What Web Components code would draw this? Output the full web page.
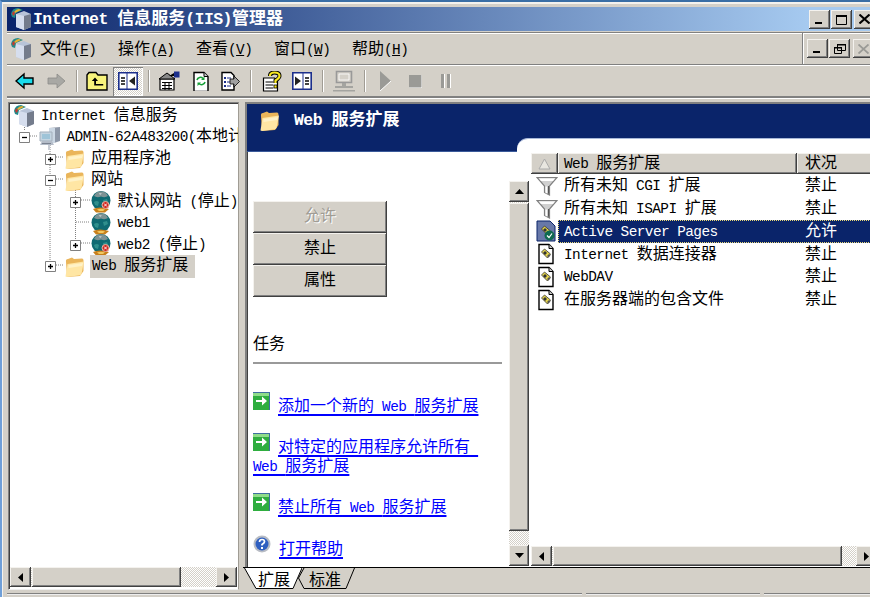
<!DOCTYPE html>
<html>
<head>
<meta charset="utf-8">
<title>Internet 信息服务(IIS)管理器</title>
<style>
  html, body { margin: 0; height: 100%; overflow: hidden; background: #d4d0c8; }
  body { font: 16px/20px "Liberation Mono", "Noto Sans CJK SC", monospace; color: #000; }
</style>
</head>
<body>
<mmc-window>
  <title-bar slot="title"><mix-text>Internet 信息服务(IIS)管理器</mix-text></title-bar>
  <menu-bar slot="menu">
    <menu-item label="文件" key="F"></menu-item>
    <menu-item label="操作" key="A"></menu-item>
    <menu-item label="查看" key="V"></menu-item>
    <menu-item label="窗口" key="W"></menu-item>
    <menu-item label="帮助" key="H"></menu-item>
  </menu-bar>
  <tool-bar slot="tools"></tool-bar>
  <tree-pane slot="tree">
    <tree-row level="0" icon="iis"><mix-text>Internet 信息服务</mix-text></tree-row>
    <tree-row level="1" icon="server" exp="-"><mix-text>ADMIN-62A483200(本地计算机)</mix-text></tree-row>
    <tree-row level="2" icon="folder" exp="+"><mix-text>应用程序池</mix-text></tree-row>
    <tree-row level="2" icon="folder" exp="-"><mix-text>网站</mix-text></tree-row>
    <tree-row level="3" icon="globestop" exp="+"><mix-text>默认网站 (停止)</mix-text></tree-row>
    <tree-row level="3" icon="globe"><mix-text>web1</mix-text></tree-row>
    <tree-row level="3" icon="globestop" exp="+"><mix-text>web2 (停止)</mix-text></tree-row>
    <tree-row level="2" icon="folder" exp="+" selected><mix-text>Web 服务扩展</mix-text></tree-row>
  </tree-pane>
  <ext-pane slot="ext">
    <task-button disabled>允许</task-button>
    <task-button>禁止</task-button>
    <task-button>属性</task-button>
    <task-heading>任务</task-heading>
    <task-link icon="go" gap="33.5"><mix-text>添加一个新的 Web 服务扩展</mix-text></task-link>
    <task-link icon="go" gap="22.5"><mix-text>对特定的应用程序允许所有&nbsp;</mix-text><br><mix-text>Web 服务扩展</mix-text></task-link>
    <task-link icon="go" gap="21.5"><mix-text>禁止所有 Web 服务扩展</mix-text></task-link>
    <task-link icon="help" gap="23"><mix-text>打开帮助</mix-text></task-link>
    <list-view slot="list">
      <list-row icon="filter" status="禁止">所有未知 CGI 扩展</list-row>
      <list-row icon="filter" status="禁止">所有未知 ISAPI 扩展</list-row>
      <list-row icon="docok" status="允许" selected>Active Server Pages</list-row>
      <list-row icon="doc" status="禁止">Internet 数据连接器</list-row>
      <list-row icon="doc" status="禁止">WebDAV</list-row>
      <list-row icon="doc" status="禁止">在服务器端的包含文件</list-row>
    </list-view>
  </ext-pane>
</mmc-window>

<script>
const FACE = '#d4d0c8'
const RAISED = `background:${FACE};box-shadow:inset -1px -1px #404040,inset 1px 1px #f4f2ee,inset -2px -2px #808080;`
const BASE = `.l{font-size:var(--lat,14.4px);letter-spacing:-.55px;white-space:pre;font-family:"Liberation Mono",monospace}`
const DITHER = `background:repeating-conic-gradient(#fff 0 25%,${FACE} 0 50%) 0 0/2px 2px;`

// ascii runs get a smaller size, same widths as the old bitmap font
const mix = s => s.replace(/[\x20-\x7e\u00a0]+/g, m => `<span class="l">${m}</span>`)

const doc = `<path d="M3 1.500h10l4 4v15H3z" fill="#fff" stroke="#000" stroke-width="1.400"/><path d="M13 1.500v4h4" fill="#ccc" stroke="#000"/>`
const gear = `<path d="M5.500 9l3-3 6 5-3 4z" fill="#e3d34a" stroke="#333" stroke-width=".8"/><path d="M7 10l2-2 2 2-2 2z" fill="#333"/><path d="M11 13l2-2 1.500 1.500-2 2z" fill="#555"/>`
const globe = `<ellipse cx="11" cy="10.500" rx="9.500" ry="9.500" fill="#0f6a72"/><path d="M4 6Q6 1.500 11 1.200 16 1.500 18 6 15 8 11 6.500 7 8 4 6z" fill="#7d9294"/><path d="M4 12q3-2 5 0l-1 4-3-1zM13 10l4-1 1 3-4 2z" fill="#2f8f8c"/><path d="M9 3l3 .5-2 1.500z" fill="#c8d4d4"/><path d="M3 19q6-3 16 0l-4 3.500H6z" fill="#c8801c"/><path d="M7 19.500q4-1.500 8 0l-2 1.500H9z" fill="#f2c860"/>`
const stop = `<circle cx="15.500" cy="15" r="3.500" fill="#d02820" stroke="#e8b0a0"/><path d="M14 13.500l3 3m0-3l-3 3" stroke="#fff" stroke-width=".9"/>`

const ICONS = {
  iis: [22, 24, `<path d="M6 7l8-3 7 3v13l-7 3-8-3z" fill="#b8c4d8"/><path d="M14 9l7-2v13l-7 3z" fill="#747c8c"/><path d="M6 7l8 2v14l-8-3z" fill="#d6deee"/><path d="M1 7Q2 1 8 1l5 2-7 3-1 5-3-1z" fill="#1f8a8c"/><path d="M4 5Q6 2 9 2l2 1-6 3z" fill="#e8b030"/><path d="M2 6l2-2 1 3-2 2z" fill="#c03a30"/>`],
  server: [22, 24, `<path d="M10 2l11-1v14l-6 2h-5z" fill="#8e98a8"/><path d="M10 2h6v15h-6z" fill="#ccd8e4"/><path d="M1 6h12v9H1z" fill="#c4d4e0" stroke="#a4b0bc"/><path d="M3 8h8v5H3z" fill="#9ec4d8"/><path d="M3 15h10l2 4H1z" fill="#b4bcc8"/><path d="M3 17h9v1H3z" fill="#7a8290"/><path d="M9 19h2v5H9z" fill="#c8ccd4"/>`],
  folder: [21, 22, `<path d="M2 6Q1.500 3 4 3l4-1.500L10 3l8-.5q1.500 0 1.500 2V15L16 20 3 21z" fill="#eab55a"/><path d="M1.500 20.500L3.500 8 20 5.500 17.500 18Q17 19 16 19.200L3 21z" fill="#ffe6a4"/><path d="M4.500 9L19 7l-1 3-13.500 2z" fill="#fff2c8"/>`],
  globe: [22, 24, globe],
  globestop: [22, 24, globe + stop],
  filter: [22, 22, `<path d="M1 2.500h20L13.500 11v9l-5-2.500V11z" fill="#d0d0d0" stroke="#808080" stroke-width="1.200"/><path d="M3 3.500h16L17 6H5z" fill="#fff"/><path d="M9.500 11.500h1.500v7l-1.500-.8z" fill="#fff"/><path d="M12 11h1v8l-1-.5z" fill="#555"/>`],
  doc: [20, 22, doc + gear],
  docok: [20, 22, `<path d="M1 1h13l5 5v15H1z" fill="#6878a8" stroke="#0a246a"/>` + gear + `<circle cx="13.500" cy="15.500" r="5" fill="#0e6a50"/><path d="M11 15.500l2 2 3-4" fill="none" stroke="#fff" stroke-width="1.200"/>`],
  go: [17, 18, `<path d="M0 0h17v18H0z" fill="#3f6f9f"/><path d="M0 1h16v17H0z" fill="#2fae3f"/><path d="M0 1h16v3H0z" fill="#8fdc88"/><path d="M3 8h6V4.500L14 9l-5 4.500V10H3z" fill="#fff"/>`],
  help: [18, 18, `<circle cx="9" cy="9" r="8.500" fill="#b8bcc4"/><circle cx="9" cy="9" r="6.500" fill="#2f5fc0"/><path d="M6.500 7Q6.500 4.500 9 4.500 11.500 4.500 11.500 6.800 11.500 8 9 9.500v1" fill="none" stroke="#fff" stroke-width="1.700"/><path d="M8 12h2v2H8z" fill="#fff"/>`],
  back: [20, 18, `<path d="M1 9l8-7v4h9v6H9v4z" fill="#19dcec" stroke="#000" stroke-width="1.400"/>`],
  forward: [20, 18, `<path d="M19 9l-8-7v4H2v6h9v4z" fill="#a8a8a4" stroke="#8c8c88" stroke-width=".8"/>`],
  up: [22, 20, `<path d="M1 4l2-2.500h7l2 2.500h9v15H1z" fill="#f8f47c" stroke="#000" stroke-width="1.400"/><path d="M6 5.500L2.800 9h2.400v4.500h9V12H7V9h2z" fill="#000" transform="translate(3 1)"/>`],
  toggleleft: [20, 18, `<path d="M.8.800h18.400v16.400H.8z" fill="#fff" stroke="#1c2f8c" stroke-width="1.600"/><path d="M9 1v16" stroke="#1c2f8c"/><path d="M3 5h4v2H3zM3 8h4v2H3zM3 11h4v2H3z" fill="#444"/><path d="M17 4.500v9L11 9z" fill="#222"/>`],
  toggleright: [20, 18, `<path d="M.8.800h18.400v16.400H.8z" fill="#fff" stroke="#1c2f8c" stroke-width="1.600"/><path d="M11 1v16" stroke="#1c2f8c"/><path d="M13 5h4v2h-4zM13 8h4v2h-4zM13 11h4v2h-4z" fill="#444"/><path d="M3 4.500v9L9 9z" fill="#222"/>`],
  props: [22, 20, `<path d="M2 8h14v11H2z" fill="#fff" stroke="#000" stroke-width="1.200"/><path d="M1 8l8-6 8 6z" fill="#888" stroke="#000"/><path d="M4 11h10v1H4zM4 14h10v1H4zM4 17h10v1H4z" fill="#000"/><path d="M7 12v7M11 12v7" stroke="#000"/><path d="M16 .5h5.500v6H16z" fill="#1c2f8c"/><path d="M11 5l5-3v3z" fill="#000"/>`],
  refresh: [18, 20, doc + `<path d="M6 9a3.500 3.500 0 0 1 6-1.500M14 11a3.500 3.500 0 0 1-6 1.500" fill="none" stroke="#18a038" stroke-width="1.600"/><path d="M13.500 5.500v3.500H10zM6.500 15v-3.500H10z" fill="#18a038"/>`],
  export: [20, 20, `<path d="M2 1.500h9l3 3V19H2z" fill="#fff" stroke="#000" stroke-width="1.400"/><path d="M4 6h2v2H4zM4 10h2v2H4zM4 14h2v2H4z" fill="#1c2f8c"/><path d="M7 7h4M7 11h4M7 15h4" stroke="#1c2f8c"/><path d="M10 8h4V5l5.500 5.500L14 16v-3h-4z" fill="#a0a0a0" stroke="#000" stroke-width=".8"/>`],
  helpdoc: [20, 21, `<path d="M1.500 7h11l3 3v10h-14z" fill="#fff" stroke="#000" stroke-width="1.200"/><path d="M3.500 11h8M3.500 14h8M3.500 17h8" stroke="#000"/><path d="M8 5Q8 1.500 12.500 1.500 17.500 1.500 17.500 5 17.500 7 13.500 9.500V12" fill="none" stroke="#000" stroke-width="4"/><path d="M8 5Q8 1.500 12.500 1.500 17.500 1.500 17.500 5 17.500 7 13.500 9.500V12" fill="none" stroke="#f8e820" stroke-width="2.200"/><path d="M12 14h3v3h-3z" fill="#f8e820" stroke="#000" stroke-width=".8"/>`],
  computer: [22, 22, `<path d="M3.500 1.500h15v11h-15z" fill="none" stroke="#999" stroke-width="1.600"/><path d="M2 16h18v2H2zM9 13h4v3H9zM0 20h22v1.500H0z" fill="#a4a4a0"/><path d="M6 4h10v6H6z" fill="${FACE}" stroke="#fff" stroke-width=".8"/>`],
  play: [11, 20, `<path d="M0 0l11 10L0 20z" fill="#9a9a96"/><path d="M0 20l11-10" stroke="#fff"/>`],
  stop: [13, 13, `<path d="M0 0h13v13H0z" fill="#9a9a96"/><path d="M13 0v13H0" fill="none" stroke="#fff"/>`],
  pause: [10, 14, `<path d="M0 0h3v14H0zM6 0h3v14H6z" fill="#9a9a96"/><path d="M3.500 0v14M9.500 0v14" stroke="#fff"/>`],
  min: [9, 9, `<path d="M0 7h7v2H0z" fill="#000"/>`],
  max: [11, 11, `<path d="M.5 1.500h10v9H.5z" fill="none" stroke="#000"/><path d="M0 1h11v2H0z" fill="#000"/>`],
  close: [11, 10, `<path d="M.5.500l10 9m0-9l-10 9" stroke="#000" stroke-width="2"/>`],
  closeoff: [11, 10, `<path d="M.5.500l10 9m0-9l-10 9" stroke="#9a9a96" stroke-width="1.800"/>`],
  restore: [12, 11, `<path d="M3.500 1.500h8v6h-8zM.5 4.500h7v6h-7z" fill="${FACE}" stroke="#000"/><path d="M3 1h9v1.500H3zM0 4h8v1.500H0z" fill="#000"/>`],
}

class MixText extends HTMLElement {
  connectedCallback() {
    if (this.shadowRoot) return
    const text = this.textContent
    this.textContent = ''
    this.attachShadow({ mode: 'open' }).innerHTML = `<style>:host{display:inline}${BASE}</style>${mix(text)}`
  }
}
customElements.define('mix-text', MixText)

class AppIcon extends HTMLElement {
  connectedCallback() {
    if (this.shadowRoot) return
    const [w, h, body] = ICONS[this.getAttribute('name')]
    this.attachShadow({ mode: 'open' }).innerHTML = `
      <style>:host{display:inline-flex;flex:none;line-height:0}</style>
      <svg width="${w}" height="${h}" viewBox="0 0 ${w} ${h}">${body}</svg>`
  }
}
customElements.define('app-icon', AppIcon)

class MmcWindow extends HTMLElement {
  connectedCallback() {
    this.attachShadow({ mode: 'open' }).innerHTML = `
      <style>
        :host {
          display: block; width: 880px; height: 597px; box-sizing: border-box; overflow: hidden;
          border-top: 2px solid #3a6ea5; border-left: 2px solid #6f9fd8;
        }
        .frame {
          height: 100%; box-sizing: border-box; border-top: 2px solid #f4f2ee; border-left: 1px solid #f4f2ee;
          padding: 3px 1px 0 4px; display: flex; flex-direction: column;
        }
        .panes { display: flex; gap: 6px; margin: 4px 0 0 1px; height: 488px; }
        .status { display: flex; gap: 4px; margin-top: 3px; flex: 1; }
        .status div { border-top: 1px solid #808080; box-shadow: inset 0 1px #eee; }
      </style>
      <div class="frame">
        <slot name="title"></slot>
        <slot name="menu"></slot>
        <slot name="tools"></slot>
        <div class="panes"><slot name="tree"></slot><slot name="ext"></slot></div>
        <div class="status">
          <div style="width:575px"></div><div style="width:174px"></div><div style="flex:1"></div>
        </div>
      </div>`
  }
}
customElements.define('mmc-window', MmcWindow)

class CapButton extends HTMLElement {
  connectedCallback() {
    this.attachShadow({ mode: 'open' }).innerHTML = `
      <style>
        :host { display:flex; flex:none; width:21px; height:19px; align-items:center; justify-content:center; ${RAISED} }
      </style>
      <app-icon name="${this.getAttribute('glyph')}"></app-icon>`
  }
}
customElements.define('cap-button', CapButton)

class TitleBar extends HTMLElement {
  connectedCallback() {
    this.attachShadow({ mode: 'open' }).innerHTML = `
      <style>
        :host {
          display: flex; align-items: center; height: 24px; margin-bottom: 1px; flex: none;
          background: linear-gradient(90deg, #0a246a, #a6caf0 92%);
          color: #fff; font-weight: bold; font-size: 17px; --lat: 16.500px; padding: 0 4px 0 3px;
        }
        .txt { margin-left: 1px; flex: 1; white-space: nowrap; padding-top: 2px; }
        cap-button + cap-button { margin-left: 1px; }
        .close { margin-left: 2px !important; }
      </style>
      <app-icon name="iis"></app-icon>
      <span class="txt"><slot></slot></span>
      <cap-button glyph="min"></cap-button><cap-button glyph="max"></cap-button><cap-button class="close" glyph="close"></cap-button>`
  }
}
customElements.define('title-bar', TitleBar)

class MenuBar extends HTMLElement {
  connectedCallback() {
    this.attachShadow({ mode: 'open' }).innerHTML = `
      <style>
        :host {
          display: flex; align-items: center; height: 30px; flex: none; padding-left: 3px;
          border-top: 1px solid #808080; box-shadow: inset 0 1px #fff; padding-top: 1px;
          border-bottom: 1px solid #808080;
        }
        .items { display: flex; gap: 21.700px; margin-left: 8px; flex: 1; padding-top: 1px; }
        .mdi { display: flex; align-items: center; align-self: stretch; padding: 0 5px 0 4px; border-left: 1px solid #808080; box-shadow: inset 1px 0 #fff; margin-top: -1px; }
        .mdi cap-button + cap-button { margin-left: 1px; }
        .mdi .x { margin-left: 3px; }
      </style>
      <app-icon name="iis"></app-icon>
      <div class="items"><slot></slot></div>
      <div class="mdi"><cap-button glyph="min"></cap-button><cap-button glyph="restore"></cap-button><cap-button class="x" glyph="closeoff"></cap-button></div>`
  }
}
customElements.define('menu-bar', MenuBar)

class MenuItem extends HTMLElement {
  connectedCallback() {
    const label = this.getAttribute('label'), key = this.getAttribute('key')
    this.attachShadow({ mode: 'open' }).innerHTML = `
      <style>:host{display:block;white-space:nowrap}${BASE}</style>
      ${label}<span class="l">(<u>${key}</u>)</span>`
  }
}
customElements.define('menu-item', MenuItem)

class ToolBar extends HTMLElement {
  connectedCallback() {
    const groups = [['back', 'forward'], ['up', 'toggleleft'], ['props', 'refresh', 'export'], ['helpdoc', 'toggleright'], ['computer'], ['play', 'stop', 'pause']]
    const btn = n => `<div class="b ${n == 'toggleleft' ? 'on' : ''}"><app-icon name="${n}"></app-icon></div>`
    this.attachShadow({ mode: 'open' }).innerHTML = `
      <style>
        :host {
          display: flex; align-items: center; height: 30px; flex: none; padding-left: 3px;
          border-top: 1px solid #fff; border-bottom: 2px solid #808080; box-shadow: 0 1px #fff;
        }
        .b { width: 30.500px; height: 29px; display: flex; align-items: center; justify-content: center; }
        .on { ${DITHER} box-shadow: inset 1px 1px #808080, inset -1px -1px #fff; }
        .s { width: 1px; height: 22px; background: #a09c94; border-right: 1px solid #fff; margin: 0 4.500px; }
      </style>
      ${groups.map(g => g.map(btn).join('')).join('<div class="s"></div>')}`
  }
}
customElements.define('tool-bar', ToolBar)

class ScrollBar extends HTMLElement {
  connectedCallback() {
    const v = this.getAttribute('orient') == 'v'
    const arrow = d => `<svg width="9" height="9" viewBox="0 0 9 9"><path d="${d}" fill="#000"/></svg>`
    const first = v ? arrow('M4.500 2L9 7H0z') : arrow('M2 4.500L7 0v9z')
    const last = v ? arrow('M4.500 7L9 2H0z') : arrow('M7 4.500L2 0v9z')
    this.attachShadow({ mode: 'open' }).innerHTML = `
      <style>
        :host { display: flex; flex: none; flex-direction: ${v ? 'column' : 'row'}; ${v ? 'width' : 'height'}: 20px; ${DITHER} }
        .b { flex: none; ${v ? 'height' : 'width'}: 21px; display: flex; align-items: center; justify-content: center; ${RAISED} }
        .t { flex: none; ${v ? 'height' : 'width'}: ${this.getAttribute('before') || 0}px; ${RAISED} margin-${v ? 'top' : 'left'}: 1px; }
        .g { flex: 1; }
      </style>
      <div class="b">${first}</div><div class="t"></div><div class="g"></div><div class="b">${last}</div>`
  }
}
customElements.define('scroll-bar', ScrollBar)

class TreePane extends HTMLElement {
  connectedCallback() {
    // page coords minus the pane's padding box (9,103)
    const lines = [
      'M15.500 22V28', 'M21 33H29',
      'M41 42V158', 'M47 54H54', 'M47 76H54', 'M47 162H54',
      'M66.500 85V136', 'M72 97H81', 'M67 119H81', 'M72 140H81',
    ]
    this.attachShadow({ mode: 'open' }).innerHTML = `
      <style>
        :host {
          display: flex; flex-direction: column; position: relative; flex: none; width: 231px; height: 488px; box-sizing: border-box;
          background: #fff; border: 1px solid #808080; border-color: #808080 #a09c94 #eee #808080;
          box-shadow: inset 1px 1px #404040;
        }
        svg { position: absolute; left: 0; top: 0; }
        .rows { flex: 1; padding: 2.500px 0 0 1px; overflow: hidden; position: relative; }
        scroll-bar { margin: 0 1px 2px 1px; }
      </style>
      <svg width="229" height="200"><path d="${lines.join('')}" fill="none" stroke="#808080" stroke-dasharray="1 1"/></svg>
      <div class="rows"><slot></slot></div>
      <scroll-bar before="149"></scroll-bar>`
  }
}
customElements.define('tree-pane', TreePane)

class TreeRow extends HTMLElement {
  connectedCallback() {
    const level = +this.getAttribute('level'), exp = this.getAttribute('exp')
    const indent = level ? 25.5 * (level - 1) + 9 : 3
    const sign = exp ? `<svg width="11" height="11" viewBox="0 0 11 11"><path d="M.5.500h10v10H.5z" fill="#fff" stroke="#808080"/><path d="M3 5.500h5${exp == '+' ? 'M5.500 3v5' : ''}" stroke="#000" stroke-width="1.300"/></svg>` : ''
    this.attachShadow({ mode: 'open' }).innerHTML = `
      <style>
        :host { display: flex; align-items: center; height: 21.500px; padding-left: ${indent}px; white-space: nowrap; }
        .e { width: 11px; height: 11px; flex: none; margin-right: 8.500px; line-height: 0; ${level ? '' : 'display:none'} }
        .t { margin-left: 4px; padding: 0 2px; line-height: 23px; ${this.hasAttribute('selected') ? `background:${FACE};margin-left:5px;padding-right:7px` : ''} }
      </style>
      <div class="e">${sign}</div>
      <app-icon name="${this.getAttribute('icon')}"></app-icon>
      <span class="t"><slot></slot></span>`
  }
}
customElements.define('tree-row', TreeRow)

class ExtPane extends HTMLElement {
  connectedCallback() {
    this.attachShadow({ mode: 'open' }).innerHTML = `
      <style>
        :host { display: flex; flex-direction: column; flex: 1; height: 488px; min-width: 0; }
        .sheet {
          height: 465px; flex: none; box-sizing: border-box; background: #fff; display: flex; flex-direction: column;
          border-top: 2px solid #808080; border-left: 2px solid #808080; box-shadow: inset 1px 0 #404040;
        }
        .band {
          height: 48px; flex: none; box-sizing: border-box; background: #0a246a; border-bottom: 1px solid #3a5a9a;
          display: flex; color: #fff; font-weight: bold; font-size: 17px; --lat: 16.500px;
        }
        .head { display: flex; gap: 14px; align-items: center; box-sizing: border-box; padding-left: 12px; height: 34px; width: 270px; white-space: nowrap; }
        .flap { flex: 1; height: 13px; align-self: flex-end; margin-bottom: -1px; background: #fff; border-top: 1px solid #a8b8d8; border-top-left-radius: 11px; }
        .body { flex: 1; display: flex; min-height: 0; }
        .tasks { width: 249px; padding: 49px 7px 0 6px; flex: none; }
        scroll-bar { margin: 29px 2px 1px 0; }
        .list { flex: 1; display: flex; flex-direction: column; min-width: 0; }
        .list scroll-bar { margin: 0 2px 1px 0; }
        .lv { flex: 1; }
        .tabs { flex: 1; display: flex; border-top: 1px solid #000; margin-left: -2px; padding-left: 1px; align-items: flex-start; }
      </style>
      <div class="sheet">
        <div class="band">
          <div class="head"><app-icon name="folder"></app-icon><mix-text>Web 服务扩展</mix-text></div>
          <div class="flap"></div>
        </div>
        <div class="body">
          <div class="tasks"><slot></slot></div>
          <scroll-bar orient="v" before="328"></scroll-bar>
          <div class="list"><div class="lv"><slot name="list"></slot></div><scroll-bar before="289"></scroll-bar></div>
        </div>
      </div>
      <div class="tabs"><tab-item active>扩展</tab-item><tab-item>标准</tab-item></div>`
  }
}
customElements.define('ext-pane', ExtPane)

class TaskButton extends HTMLElement {
  connectedCallback() {
    this.attachShadow({ mode: 'open' }).innerHTML = `
      <style>
        :host { display: flex; width: 134px; height: 32px; box-sizing: border-box; padding-bottom: 1px; align-items: center; justify-content: center; ${RAISED}
          ${this.hasAttribute('disabled') ? 'color:#a09c94;text-shadow:1px 1px #fff;' : ''} }
      </style><slot></slot>`
  }
}
customElements.define('task-button', TaskButton)

class TaskHeading extends HTMLElement {
  connectedCallback() {
    this.attachShadow({ mode: 'open' }).innerHTML = `
      <style>
        :host { display: block; margin-top: 37px; line-height: 22px; padding-bottom: 6px; border-bottom: 2px solid #999; }
      </style><slot></slot>`
  }
}
customElements.define('task-heading', TaskHeading)

class TaskLink extends HTMLElement {
  connectedCallback() {
    this.attachShadow({ mode: 'open' }).innerHTML = `
      <style>
        :host { display: block; margin-top: ${this.getAttribute('gap')}px; line-height: 19px; }
        app-icon { vertical-align: top; margin: -6px 8px 0 0; }
        a { color: #0000ff; text-decoration: underline; text-decoration-thickness: 1.500px; text-underline-offset: 3px; }
      </style>
      <app-icon name="${this.getAttribute('icon')}"></app-icon><a href="#"><slot></slot></a>`
  }
}
customElements.define('task-link', TaskLink)

class ListView extends HTMLElement {
  connectedCallback() {
    this.attachShadow({ mode: 'open' }).innerHTML = `
      <style>
        :host { display: block; }
        .h { display: flex; height: 21px; margin: 1px 0 .5px; }
        .h div { ${RAISED} line-height: 23px; white-space: nowrap; overflow: hidden; box-sizing: border-box; }
        .c0 { width: 27px; display: flex; align-items: center; justify-content: center; }
        .c1 { width: 239px; padding-left: 6px; }
        .c2 { flex: 1; padding-left: 8px; }
        ${BASE}
      </style>
      <div class="h">
        <div class="c0"><svg width="13" height="12"><path d="M6.500 1L12 11H1z" fill="#e8e6e0" stroke="#aaa"/></svg></div>
        <div class="c1">${mix('Web 服务扩展')}</div>
        <div class="c2">状况</div>
      </div>
      <slot></slot>`
  }
}
customElements.define('list-view', ListView)

class ListRow extends HTMLElement {
  connectedCallback() {
    const sel = this.hasAttribute('selected')
    const text = this.textContent
    this.textContent = ''
    this.attachShadow({ mode: 'open' }).innerHTML = `
      <style>
        :host { display: flex; align-items: center; height: 22.750px; white-space: nowrap; }
        .i { width: 27px; padding-left: 5px; box-sizing: border-box; flex: none; display: flex; }
        .m { flex: 1; align-self: stretch; display: flex; align-items: center; box-sizing: border-box; padding: 1px 0 0 6px;
          ${sel ? 'background:#0a246a;color:#fff;outline:1px dotted #e8d878;outline-offset:-1px;' : ''} }
        .n { width: 241px; flex: none; }
        ${BASE}
      </style>
      <div class="i"><app-icon name="${this.getAttribute('icon')}"></app-icon></div>
      <div class="m"><div class="n">${mix(text)}</div><div>${this.getAttribute('status')}</div></div>`
  }
}
customElements.define('list-row', ListRow)

class TabItem extends HTMLElement {
  connectedCallback() {
    const on = this.hasAttribute('active')
    const w = on ? 58 : 57
    const pts = on ? `0.5,0 12,20.500 49,20.500 58,0` : `6,0 0.5,10 6,20.500 48,20.500 56.500,0`
    this.attachShadow({ mode: 'open' }).innerHTML = `
      <style>
        :host { display: block; position: relative; width: ${w}px; height: 21px; flex: none; ${on ? 'z-index:1;' : 'margin-left:-4px;'} }
        svg { position: absolute; left: 0; top: 0; }
        span { position: relative; display: block; line-height: 21px; padding: 3px 0 0 ${on ? 14 : 11}px; }
      </style>
      <svg width="${w}" height="21"><polygon points="${pts}" fill="${on ? '#fff' : FACE}"/><polyline points="${pts}" fill="none" stroke="#000"/></svg>
      <span><slot></slot></span>`
  }
}
customElements.define('tab-item', TabItem)
</script>
</body>
</html>
